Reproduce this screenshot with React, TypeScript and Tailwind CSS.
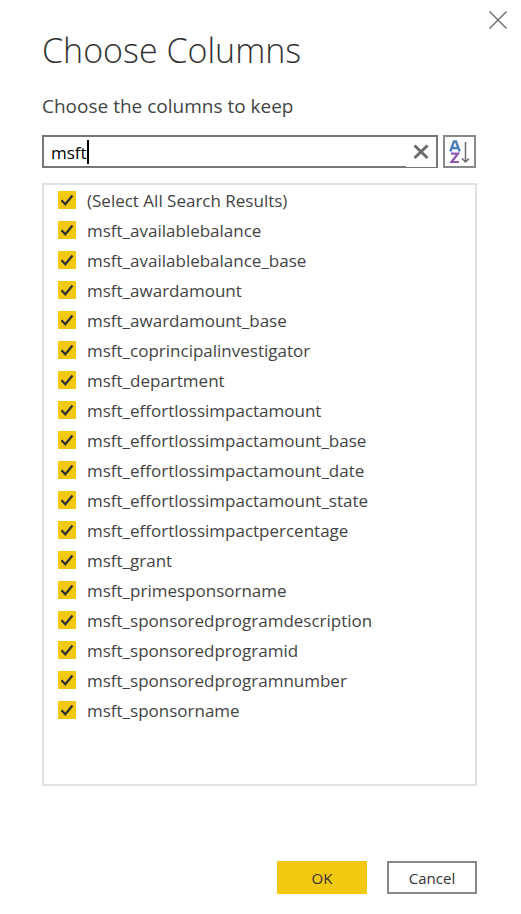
import { useState } from "react";

const columns = [
  "(Select All Search Results)",
  "msft_availablebalance",
  "msft_availablebalance_base",
  "msft_awardamount",
  "msft_awardamount_base",
  "msft_coprincipalinvestigator",
  "msft_department",
  "msft_effortlossimpactamount",
  "msft_effortlossimpactamount_base",
  "msft_effortlossimpactamount_date",
  "msft_effortlossimpactamount_state",
  "msft_effortlossimpactpercentage",
  "msft_grant",
  "msft_primesponsorname",
  "msft_sponsoredprogramdescription",
  "msft_sponsoredprogramid",
  "msft_sponsoredprogramnumber",
  "msft_sponsorname",
];

function CloseIcon() {
  return (
    <svg width="18" height="18" viewBox="0 0 18 18" fill="none" stroke="#666" strokeWidth="1.3" aria-hidden="true">
      <path d="M.5.5l17 17M17.5.5l-17 17" />
    </svg>
  );
}

function ClearIcon() {
  return (
    <svg width="16" height="16" viewBox="0 0 16 16" fill="none" stroke="#6b6b6b" strokeWidth="3" aria-hidden="true">
      <path d="M1.5 1.500l13 12.500M14.500 1.500l-13 12.500" />
    </svg>
  );
}

function SortIcon() {
  return (
    <svg width="21" height="25" viewBox="0 0 21 25" fill="none" aria-hidden="true">
      <path d="M1.300 12.500L5 2.500h2l3.700 10M2.800 9h6.400" stroke="#4a7ebb" strokeWidth="2.300" />
      <path d="M2 14.700h7L2.500 23H10" stroke="#8c57b0" strokeWidth="2.200" />
      <path d="M16.500 3v20M13 19.500l3.500 3.500 3.500-3.500" stroke="#6b6b6b" strokeWidth="1.500" />
    </svg>
  );
}

function ColumnRow({ name }: { name: string }) {
  const [checked, setChecked] = useState(true);
  return (
    <li>
      <label className="flex h-[30px] items-center gap-[11px]">
        <span className="grid size-[18px] shrink-0">
          <input
            type="checkbox"
            checked={checked}
            onChange={(e) => setChecked(e.target.checked)}
            className="col-start-1 row-start-1 size-[18px] appearance-none border border-[#f2c811] checked:bg-[#f2c811]"
          />
          {checked && (
            <svg className="pointer-events-none col-start-1 row-start-1" width="18" height="18" viewBox="0 0 18 18" fill="none" aria-hidden="true">
              <path d="M3.500 9.300l3.800 3.900L14.500 4.500" stroke="#333" strokeWidth="2.300" />
            </svg>
          )}
        </span>
        <span className="pt-0.5">{name}</span>
      </label>
    </li>
  );
}

export default function App() {
  const [query, setQuery] = useState("msft");
  return (
    <main className="bg-white pr-[44px] pb-5 pl-[42px] font-['Open_Sans','Noto_Sans',sans-serif] text-[17px] leading-6 text-[#444]">
      <header className="relative pt-[26px]">
        <h1 className="text-[34px] leading-[48px] font-light text-[#333]">Choose Columns</h1>
        <button type="button" aria-label="Close" className="absolute top-[11px] -right-[30px]">
          <CloseIcon />
        </button>
      </header>
      <p className="mt-5 text-[19px]">Choose the columns to keep</p>

      <div className="mt-[17px] flex gap-[5px] pr-px">
        <div className="relative flex h-[33px] min-w-0 flex-1 border-2 border-[#777]">
          <input
            type="text"
            aria-label="Search columns"
            value={query}
            onChange={(e) => setQuery(e.target.value)}
            className="min-w-0 flex-1 pt-0.5 pl-[7px] text-black outline-none"
          />
          <span className="pointer-events-none absolute top-[3px] left-[43px] h-6 w-[2px] bg-black" />
          <button
            type="button"
            aria-label="Clear search"
            onClick={() => setQuery("")}
            className="-mb-px flex w-[30px] items-center justify-center bg-white"
          >
            <ClearIcon />
          </button>
        </div>
        <button
          type="button"
          aria-label="Sort columns"
          className="flex h-[33px] w-[33px] items-center justify-center border-2 border-[#888]"
        >
          <SortIcon />
        </button>
      </div>

      <ul className="mt-[15px] border-2 border-[#dee1e5] pb-[59px] pl-[14px]">
        {columns.map((name) => (
          <ColumnRow key={name} name={name} />
        ))}
      </ul>

      <footer className="mt-[75px] flex justify-end gap-5 text-[15px] text-[#333]">
        <button type="button" className="h-[33px] w-[90px] bg-[#f2c811]">
          OK
        </button>
        <button type="button" className="h-[33px] w-[90px] border-2 border-[#888] bg-white">
          Cancel
        </button>
      </footer>
    </main>
  );
}
